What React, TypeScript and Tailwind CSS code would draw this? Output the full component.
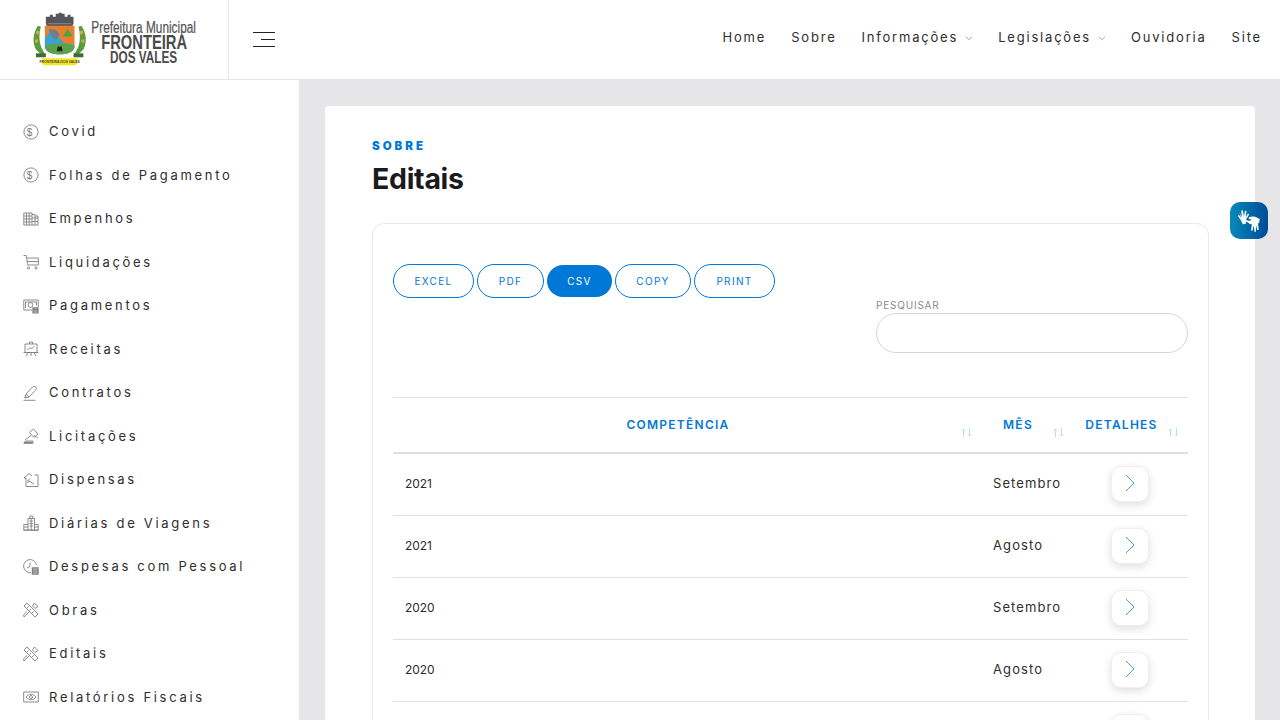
import type { ReactNode } from "react";

const ICON = "w-4 h-4 shrink-0 fill-none stroke-[#808080] stroke-[0.9]";

function Dollar() {
  return (
    <svg viewBox="0 0 16 16" className={ICON}>
      <circle cx="8" cy="8" r="7.1" />
      <text x="8" y="11.600" textAnchor="middle" fontSize="10" fontFamily="Liberation Sans, sans-serif" fill="#777" stroke="none">
        $
      </text>
    </svg>
  );
}

const menuIcons: Record<string, ReactNode> = {
  dollar: <Dollar />,
  book: (
    <svg viewBox="0 0 16 16" className={ICON}>
      <path d="M.8 2h8.200v12H.8zM3.500 2v12M6.200 2v12M.8 5h8.200M.8 8h8.200M.8 11h8.200M9 3.500h3v10.500H9M12 5h3v9h-3M9 7h6M9 10.500h6" />
    </svg>
  ),
  cart: (
    <svg viewBox="0 0 16 16" className={ICON}>
      <path d="M.5 1.500h2.700l1.500 9.500h10.500M3.500 4h11.800M4 7.500h11M15.300 4v7" />
      <circle cx="5.500" cy="14" r="1.100" />
      <circle cx="13" cy="14" r="1.100" />
    </svg>
  ),
  pay: (
    <svg viewBox="0 0 16 16" className={ICON}>
      <path d="M9 12H.8V2h14.400v7M2.500 10V4h11v3.500" />
      <circle cx="7.500" cy="7" r="2.400" />
      <path d="M10 9.800h5v5h-5zM10 11.500h5M10 13.200h5" strokeWidth="1.300" />
    </svg>
  ),
  board: (
    <svg viewBox="0 0 16 16" className={ICON}>
      <path d="M2 3h12v8.500H2zM.5 11.500h15M6.500 3V1h3v2M5 11.500 3 15M11 11.500l2 3.500M8 11.500V15M4.500 9l2.500-2.500 1.500 1.500 3-3" />
    </svg>
  ),
  pen: (
    <svg viewBox="0 0 16 16" className={ICON}>
      <path d="M.5 15.300h12M1.800 13 3 9l6.500-7a2 2 0 0 1 3.200 2.800L6 12zM3 9l3 3M1.800 13 3.500 11" />
    </svg>
  ),
  gavel: (
    <svg viewBox="0 0 16 16" className={ICON}>
      <path d="m6.500 4.500 4-3.500 4.500 5-4 3.500zM8 7.500l-6 4.500M11 7.500l4 2.500M.8 15.300h9.200v-2.300H2.500z" />
      <path d="M1 14.500h8.500" strokeWidth="1.400" />
    </svg>
  ),
  house: (
    <svg viewBox="0 0 16 16" className={ICON}>
      <path d="M1 6 6 1.500 9 4M1 6h2v8.500h12V3h-3.500M5 8.500l3 1.500 3 2.500M5 8.500 7 6.500M5 8.500V11" />
    </svg>
  ),
  building: (
    <svg viewBox="0 0 16 16" className={ICON}>
      <path d="M5 15V3.500h6.500V15M6.800 3.500V1h3v2.500M5 9.500H.8V15h14.400V9.500h-3.700M6.500 6h3.500M6.500 8.500h3.500M6.500 11h3.500M8.200 3.500V15M.5 15.300h15M1 12h4M11.500 12h4" />
    </svg>
  ),
  clock: (
    <svg viewBox="0 0 16 16" className={ICON}>
      <path d="M8 13.500A6.500 6.500 0 1 1 13.500 6M7 3.500V7.500l-3 1.500" />
      <path d="M9.500 9h5.500v6H9.500zM9.500 11h5.500M9.500 13h5.500" strokeWidth="1.400" />
    </svg>
  ),
  tools: (
    <svg viewBox="0 0 16 16" className={ICON}>
      <path d="m1 4 3-3 11 11-3 3zM4 6l1.500-1.500M6.500 8.500 8 7M9 11l1.500-1.500M11.500 1 15 4.500l-3 2-2.500-2.500zM6 10 2.500 13.500 1 15l-.3-2.300L4 9.500" />
    </svg>
  ),
  eye: (
    <svg viewBox="0 0 16 16" className={ICON}>
      <path d="M.7 3h14.600v10H.7z" />
      <path d="M3 8c2.800-3.600 7.200-3.600 10 0-2.800 3.600-7.200 3.600-10 0z" />
      <circle cx="8" cy="8" r="1.500" />
    </svg>
  ),
};

const menu: [string, string][] = [
  ["Covid", "dollar"],
  ["Folhas de Pagamento", "dollar"],
  ["Empenhos", "book"],
  ["Liquidações", "cart"],
  ["Pagamentos", "pay"],
  ["Receitas", "board"],
  ["Contratos", "pen"],
  ["Licitações", "gavel"],
  ["Dispensas", "house"],
  ["Diárias de Viagens", "building"],
  ["Despesas com Pessoal", "clock"],
  ["Obras", "tools"],
  ["Editais", "tools"],
  ["Relatórios Fiscais", "eye"],
];

const rows = [
  ["2021", "Setembro"],
  ["2021", "Agosto"],
  ["2020", "Setembro"],
  ["2020", "Agosto"],
];

function Logo() {
  return (
    <svg viewBox="0 0 228 80" className="w-[228px] h-[79px] block">
      {/* crown */}
      <path d="M45 17h4v-2h3v2h3v-3h3v-1h3v1h3v3h3v-2h3v2h3v7l-2 4H47l-2-4z" fill="#55565a" />
      <path d="M47 24h24" stroke="#8a8a8a" strokeWidth="1" />
      {/* laurel */}
      <path d="M37 26c-5 7-6 17-2 24l6 6 3-1-4-8c-2-6-2-14 0-20z" fill="#5f9a3c" />
      <path d="M81 26c5 7 6 17 2 24l-6 6-3-1 4-8c2-6 2-14 0-20z" fill="#5f9a3c" />
      <path d="M36 31l3 1-1 3-3-1zM34 40l3 0v3l-3 0zM82 31l-3 1 1 3 3-1zM84 40l-3 0v3l3 0z" fill="#c9b23a" />
      {/* shield */}
      <path d="M44 26h30v20c0 6-7 9-15 9s-15-3-15-9z" fill="#e8812d" />
      <path d="M50 31l6 1 3 7 4 4 8 2 3 1v1c0 5-7 8-15 8s-15-3-15-8v-8z" fill="#39a3d6" />
      <path d="M48 29l7 1 4 5-4 6-5-5z" fill="#6d7f8a" />
      <path d="M62 37l5-8 5 8z" fill="#4aa34a" />
      <path d="M44 47c6-4 24-4 30 0 0 5-7 8-15 8s-15-3-15-8z" fill="#5aa447" />
      <path d="M57 47h4l1 5h-6z" fill="#222" />
      {/* ribbon */}
      <path d="M41 59h36v5l-2 2H43l-2-2z" fill="#f4e51c" />
      <text x="59" y="64" textAnchor="middle" fontSize="3.500" fontWeight="700" fill="#444" fontFamily="Liberation Sans, sans-serif">
        FRONTEIRA DOS VALES
      </text>
      <rect x="35" y="54" width="10" height="4" fill="#3f6b34" />
      <rect x="73" y="54" width="10" height="4" fill="#3f6b34" />
      {/* wordmark */}
      <text x="91" y="33" textLength="106" lengthAdjust="spacingAndGlyphs" fontSize="17.500" fill="#555" stroke="#555" strokeWidth="0.250" fontFamily="Liberation Sans, sans-serif">
        Prefeitura Municipal
      </text>
      <text x="101" y="50" textLength="87" lengthAdjust="spacingAndGlyphs" fontSize="20" fontWeight="700" fill="#4a4a4a" fontFamily="Liberation Sans, sans-serif">
        FRONTEIRA
      </text>
      <text x="110" y="64" textLength="68" lengthAdjust="spacingAndGlyphs" fontSize="16" fontWeight="700" fill="#4a4a4a" fontFamily="Liberation Sans, sans-serif">
        DOS VALES
      </text>
    </svg>
  );
}

function Chevron() {
  return (
    <svg viewBox="0 0 8 5" className="w-2 h-[5px] ml-[7px] mt-[1px] fill-none stroke-[#888] stroke-[0.8]">
      <path d="m1 .7 3 3 3-3" />
    </svg>
  );
}

function SortArrows() {
  return (
    <svg viewBox="0 0 11 9" className="absolute right-[9px] top-[30px] w-[11px] h-[9px] fill-none stroke-[#bcdcf5] stroke-[1]">
      <path d="M2.500 9V1M.8 2.800 2.500 1l1.700 1.800M8.500 0v8M6.800 6.200 8.500 8l1.700-1.800" />
    </svg>
  );
}

function LibrasHands() {
  return (
    <svg viewBox="0 0 24 24" className="w-[24px] h-[24px] fill-white">
      {/* upper left hand */}
      <path d="M2.200 3.500 4.800 8l-.5-6.500 1.500-.2L7 7.500 8 1.800l1.500.3-.8 6 2.300-3.500 1.100.8-3 5-.3 4.300-3 .6L4 11.500.8 6.800 2 6l2.300 3.200z" />
      {/* lower right hand */}
      <path d="M12 8.200c3.200-1.300 6.800-1 8.600.8l2.200 1-.6 3.500-1.200 1.200.8 6-1.500.3-1.300-4.800-.1 6.600-1.500 0-.5-6.400-1.500 5.400-1.400-.4.900-6.100c-1.800 0-3-.7-3.800-1.800l-2.500-1.100.7-1.300 2.500.7 2.300-.3-.2-1.200-2.200-.4z" />
    </svg>
  );
}

export default function App() {
  return (
    <div className="h-screen overflow-hidden flex flex-col bg-[#e6e6e8] font-['Inter',sans-serif] text-[#1f1f1f]">
      {/* HEADER */}
      <header className="h-20 shrink-0 flex items-center bg-white border-b border-[#e6e6e6]">
        <div className="w-[229px] h-full border-r border-[#e6e6e6]">
          <Logo />
        </div>
        <div className="w-[71px] h-full flex flex-col items-end justify-center gap-[6px] pr-[25px] pb-px">
          <span className="block w-[22px] h-px bg-[#222]" />
          <span className="block w-[14px] h-px bg-[#222]" />
          <span className="block w-[22px] h-px bg-[#222]" />
        </div>
        <nav className="flex-1 flex items-center justify-end gap-[25px] pr-[18px] pb-[4px] text-[13px] tracking-[1.800px] text-[#2e2e2e]">
          <a>Home</a>
          <a>Sobre</a>
          <a className="flex items-center">
            Informações
            <Chevron />
          </a>
          <a className="flex items-center">
            Legislações
            <Chevron />
          </a>
          <a>Ouvidoria</a>
          <a>Site</a>
        </nav>
      </header>

      <div className="flex-1 min-h-0 flex">
        {/* SIDEBAR */}
        <aside className="w-[300px] shrink-0 bg-white border-r border-[#e6e6e6] pt-[30px] pl-[23px]">
          {menu.map(([label, icon]) => (
            <div key={label} className="h-[43.500px] flex items-center gap-[10px] text-[13px] tracking-[2.700px] text-[#2e2e2e]">
              {menuIcons[icon]}
              <span>{label}</span>
            </div>
          ))}
        </aside>

        {/* CONTENT */}
        <main className="flex-1 min-w-0 pt-[26px] pl-[25px] pr-[25px]">
          <section className="bg-white rounded-[4px] pl-[47px] pr-[46px] pt-[33px]">
            <p className="text-[11.500px] leading-[14px] font-black tracking-[3px] text-[#0078d7]">SOBRE</p>
            <h1 className="mt-[9px] text-[28.500px] leading-[34px] font-bold tracking-[-0.300px] text-[#1b1b1f]">Editais</h1>

            <div className="mt-[27px] border border-[#e9e9ec] rounded-[12px] px-[20px] pt-[40px] pb-[40px]">
              <div className="flex items-start justify-between">
                <div className="flex items-center gap-[3px] text-[10px] tracking-[1.350px] text-[#0078d7]">
                  <button className="w-[81px] h-[34px] rounded-full border border-[#0078d7]">EXCEL</button>
                  <button className="w-[67px] h-[34px] rounded-full border border-[#0078d7]">PDF</button>
                  <button className="w-[65px] h-[32px] rounded-full bg-[#0078d7] text-white">CSV</button>
                  <button className="w-[76px] h-[34px] rounded-full border border-[#0078d7]">COPY</button>
                  <button className="w-[81px] h-[34px] rounded-full border border-[#0078d7]">PRINT</button>
                </div>
                <div className="w-[312px] pt-[35px]">
                  <p className="text-[10px] leading-[13px] tracking-[0.800px] text-[#8a8a8a]">PESQUISAR</p>
                  <input className="block w-full h-[40px] mt-px rounded-full border border-[#d2d6dc] bg-white" />
                </div>
              </div>

              {/* TABLE */}
              <div className="mt-[44px]">
                <div className="grid grid-cols-[588px_92px_115px] h-[57px] border-t border-b-2 border-[#e0e0e0] text-[12px] font-semibold tracking-[1.250px] text-[#0078d7]">
                  {["COMPETÊNCIA", "MÊS", "DETALHES"].map((title) => (
                    <div key={title} className="relative pl-[12px] pr-[30px] pt-[20px] text-center leading-[14px]">
                      {title}
                      <SortArrows />
                    </div>
                  ))}
                </div>
                {rows.map(([year, month], i) => (
                  <div key={i} className="grid grid-cols-[588px_92px_115px] h-[62px] items-center border-b border-[#e0e0e0] text-[#2e2e2e]">
                    <span className="pl-[12px] pb-[2px] text-[12px] tracking-[-0.100px]">{year}</span>
                    <span className="pl-[12px] pb-[2px] text-[13px] tracking-[1.100px]">{month}</span>
                    <span className="pl-[38px] pb-[2px]">
                      <button className="w-[38px] h-[36px] flex items-center justify-center rounded-[10px] border border-[#efefef] bg-white shadow-[0_3px_8px_rgba(0,0,0,0.13)]">
                        <svg viewBox="0 0 10 18" className="w-[10px] h-[18px] -mt-[2px] fill-none stroke-[#4a9be6] stroke-[1]">
                          <path d="m1 1 8 8-8 8" />
                        </svg>
                      </button>
                    </span>
                  </div>
                ))}
                {/* row cut by the fold */}
                <div className="h-[62px] pl-[626px] pt-[12px]">
                  <div className="ml-[92px] w-[38px] h-[36px] rounded-[10px] border border-[#efefef] bg-white shadow-[0_3px_8px_rgba(0,0,0,0.13)]" />
                </div>
              </div>
            </div>
          </section>
        </main>
      </div>

      {/* LIBRAS WIDGET */}
      <div className="absolute left-[1230px] top-[202px] w-[38px] h-[37px] rounded-[10px] bg-gradient-to-r from-[#0a8ab8] to-[#004a98] flex items-center justify-center">
        <LibrasHands />
      </div>
    </div>
  );
}
